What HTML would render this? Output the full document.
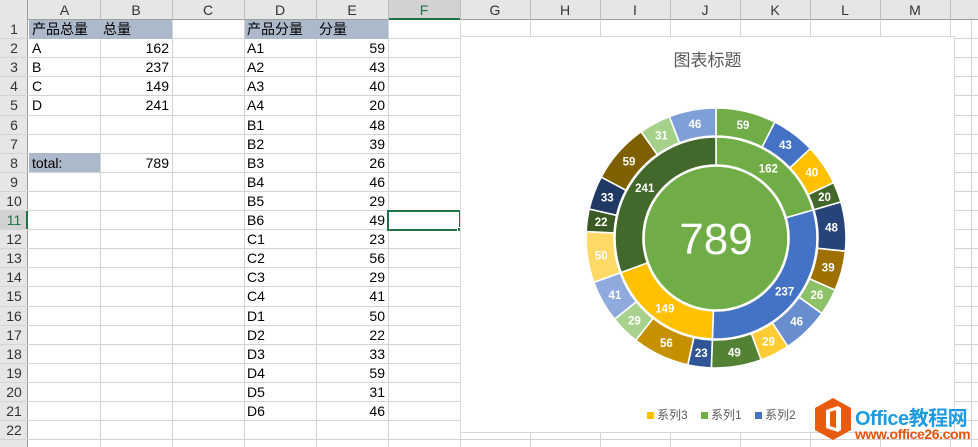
<!DOCTYPE html>
<html><head><meta charset="utf-8"><style>
*{margin:0;padding:0;box-sizing:border-box}
html{width:978px;height:447px;overflow:hidden}
body{width:978px;height:447px;overflow:hidden;background:#fff;font-family:"Liberation Sans","Noto Sans CJK SC",sans-serif;position:relative}
.a{position:absolute}
.hl{position:absolute;background:#d4d4d4}
.ch{position:absolute;top:0;height:20px;text-align:center;font-size:14px;color:#333;line-height:20px}
.rh{position:absolute;left:0;width:28px;text-align:center;font-size:14px;color:#333}
.c{position:absolute;font-size:14px;color:#000;white-space:nowrap}
</style></head><body>
<div class="a" style="left:0;top:0;width:978px;height:20px;background:#e6e6e6;border-bottom:1px solid #9e9e9e"></div>
<div class="a" style="left:0;top:0;width:28px;height:447px;background:#e6e6e6;border-right:1px solid #9e9e9e"></div>
<div class="a" style="left:388px;top:0;width:72px;height:20px;background:#d2d2d2;border-bottom:2px solid #217346"></div>
<div class="a" style="left:0;top:211px;width:28px;height:19px;background:#d2d2d2;border-right:2px solid #217346"></div>
<div id="g"></div>
<div class="a" style="left:29px;top:20px;width:143px;height:19px;background:#acb9ca"></div>
<div class="a" style="left:245px;top:20px;width:143px;height:19px;background:#acb9ca"></div>
<div class="a" style="left:29px;top:153px;width:71px;height:19px;background:#acb9ca"></div>
<div id="t"></div>
<div class="a" style="left:387px;top:210px;width:74px;height:21px;border:2px solid #217346"></div>
<div class="a" style="left:457px;top:227px;width:5px;height:5px;background:#217346;border:1px solid #fff"></div>
<div class="a" style="left:460px;top:36px;width:495px;height:397px;background:#fff;border:1px solid #d9d9d9"></div>
<div class="a" style="left:460px;top:46px;width:495px;text-align:center;font-size:17px;color:#595959">图表标题</div>
<svg class="a" style="left:0;top:0" width="978" height="447" id="s"></svg>
<div class="a" style="left:647px;top:406px;font-size:12px;color:#595959;white-space:nowrap">
<span style="display:inline-block;width:7px;height:7px;background:#ffc000;margin-right:3px"></span>系列3&nbsp;&nbsp;&nbsp;&nbsp;<span style="display:inline-block;width:7px;height:7px;background:#70ad47;margin-right:3px"></span>系列1&nbsp;&nbsp;&nbsp;&nbsp;<span style="display:inline-block;width:7px;height:7px;background:#4472c4;margin-right:3px"></span>系列2</div>
<svg class="a" style="left:814px;top:397px" width="38" height="44" viewBox="0 0 38 44">
<polygon points="19,1 37,11 37,33 19,43 1,33 1,11" fill="#e85a0c"/>
<path d="M12,13 L24,9 L27,11 L27,33 L24,35 L12,31 Z M16,15 L16,29 L22,31 L22,13 Z" fill="#fff" fill-rule="evenodd"/>
</svg>
<div class="a" style="left:855px;top:402px;font-size:20px;font-weight:bold;color:#1d9be2;white-space:nowrap;letter-spacing:-0.5px">Office教程网</div>
<div class="a" style="left:855px;top:426px;font-size:14px;font-weight:bold;color:#e8540c;white-space:nowrap;letter-spacing:-0.4px">www.office26.com</div>
<script>
(function(){
var cols=[29,100,172,244,316,388,460,530,600,670,740,810,880,950];
var names="ABCDEFGHIJKLM";
var g='';
for(var i=0;i<13;i++){g+='<div class="ch" style="left:'+cols[i]+'px;width:'+(cols[i+1]-cols[i])+'px;'+(i==5?'color:#217346':'')+'">'+names[i]+'</div>';
g+='<div class="hl" style="left:'+cols[i+1]+'px;top:0;width:1px;height:20px;background:#bdbdbd"></div>';}
for(var i=1;i<14;i++)g+='<div class="hl" style="left:'+cols[i]+'px;top:20px;width:1px;height:427px"></div>';
g+='<div class="hl" style="left:971px;top:20px;width:1px;height:427px"></div>';
for(var r=1;r<=22;r++){var yy=19+(r-1)*19.1;
g+='<div class="hl" style="left:0;top:'+(yy+19.1)+'px;width:978px;height:1px"></div>';
g+='<div class="rh" style="top:'+(yy+1)+'px;height:19px;line-height:19px;'+(r==11?'color:#217346':'')+'">'+r+'</div>';}
document.getElementById('g').innerHTML=g;
var t='';
function cell(c,r,txt,right){var yy=19+(r-1)*19.1;var x=cols[c];var w=cols[c+1]-cols[c];
t+='<div class="c" style="left:'+(x+3)+'px;width:'+(w-6)+'px;top:'+(yy+1)+'px;line-height:19px;'+(right?'text-align:right':'')+'">'+txt+'</div>';}
cell(0,1,'产品总量');cell(1,1,'总量');cell(3,1,'产品分量');cell(4,1,'分量');
var A=[['A',162],['B',237],['C',149],['D',241]];
A.forEach(function(a,i){cell(0,i+2,a[0]);cell(1,i+2,a[1],1)});
cell(0,8,'total:');cell(1,8,'789',1);
var D=[['A1',59],['A2',43],['A3',40],['A4',20],['B1',48],['B2',39],['B3',26],['B4',46],['B5',29],['B6',49],['C1',23],['C2',56],['C3',29],['C4',41],['D1',50],['D2',22],['D3',33],['D4',59],['D5',31],['D6',46]];
D.forEach(function(a,i){cell(3,i+2,a[0]);cell(4,i+2,a[1],1)});
document.getElementById('t').innerHTML=t;
var cx=716,cy=238,s='';
function arc(r0,r1,a0,a1,col){function p(r,a){return [cx+r*Math.sin(a),cy-r*Math.cos(a)]}
var l=(a1-a0)>Math.PI?1:0;var A1=p(r1,a0),B1=p(r1,a1),C1=p(r0,a1),D1=p(r0,a0);
return '<path d="M'+A1+' A'+r1+','+r1+' 0 '+l+' 1 '+B1+' L'+C1+' A'+r0+','+r0+' 0 '+l+' 0 '+D1+'Z" fill="'+col+'" stroke="#fff" stroke-width="1.6"/>';}
function lab(r,a,txt){return '<text x="'+(cx+r*Math.sin(a))+'" y="'+(cy-r*Math.cos(a)+4)+'" fill="#fff" font-size="11.5" font-weight="bold" text-anchor="middle" font-family="Liberation Sans,sans-serif">'+txt+'</text>';}
var T=789,a=0,mid=['#70ad47','#4472c4','#ffc000','#43682b'];
s+='<circle cx="'+cx+'" cy="'+cy+'" r="72" fill="#70ad47" stroke="#fff" stroke-width="1.6"/>';
var L='';
A.forEach(function(v,i){var b=a+v[1]/T*2*Math.PI;s+=arc(73,101,a,b,mid[i]);L+=lab(87,(a+b)/2,v[1]);a=b;});
var oc=['#70ad47','#4472c4','#ffc000','#43682b','#264478','#9e7000','#8cc168','#698ed0','#ffcd33','#548235','#2f5597','#c69000','#a9d18e','#8faadc','#ffd966','#3b5a24','#203864','#7f6000','#a5d18a','#7f9fd8'];
a=0;D.forEach(function(v,i){var b=a+v[1]/T*2*Math.PI;s+=arc(102,130,a,b,oc[i]);L+=lab(116,(a+b)/2,v[1]);a=b;});
s+=L+'<text x="'+cx+'" y="'+(cy+16)+'" fill="#fff" font-size="44" text-anchor="middle" font-family="Liberation Sans,sans-serif">789</text>';
document.getElementById('s').innerHTML=s;
})();
</script>
</body></html>
